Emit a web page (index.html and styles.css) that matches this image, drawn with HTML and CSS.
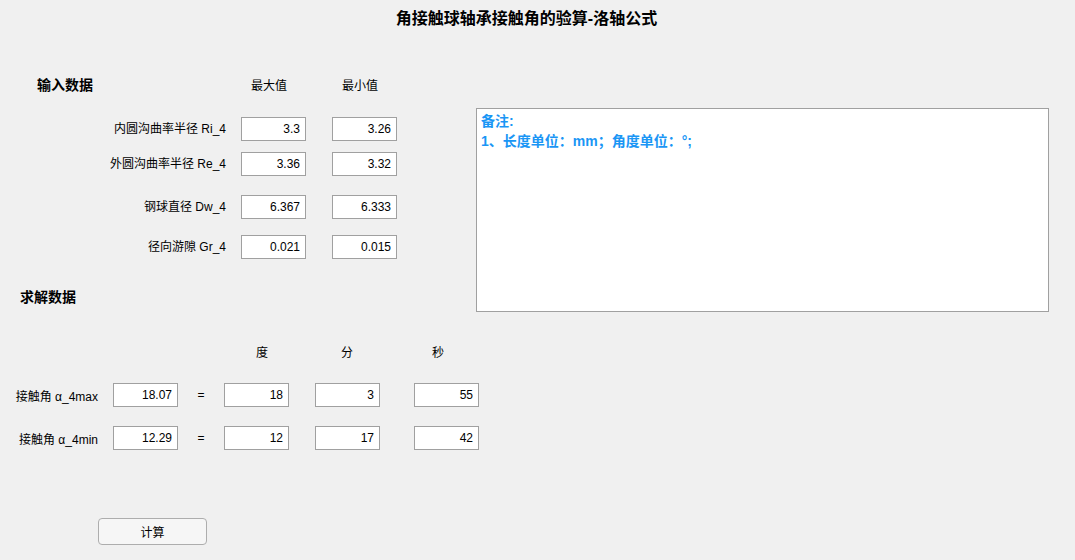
FILE: index.html
```html
<!DOCTYPE html>
<html lang="zh-CN">
<head>
<meta charset="utf-8">
<title>角接触球轴承接触角的验算-洛轴公式</title>
<link rel="stylesheet" href="styles.css">
</head>
<body>
<div class="app">
  <h1 class="title">角接触球轴承接触角的验算-洛轴公式</h1>
  <div class="top">
    <div class="input-panel">
      <div class="grid-row head">
        <span class="sec sec-in">输入数据</span>
        <span class="colh">最大值</span>
        <span class="colh">最小值</span>
      </div>
      <div class="grid-row r1">
        <span class="lbl">内圆沟曲率半径 Ri_4</span>
        <span class="field">3.3</span>
        <span class="field">3.26</span>
      </div>
      <div class="grid-row r2">
        <span class="lbl">外圆沟曲率半径 Re_4</span>
        <span class="field">3.36</span>
        <span class="field">3.32</span>
      </div>
      <div class="grid-row r3">
        <span class="lbl">钢球直径 Dw_4</span>
        <span class="field">6.367</span>
        <span class="field">6.333</span>
      </div>
      <div class="grid-row r4">
        <span class="lbl">径向游隙 Gr_4</span>
        <span class="field">0.021</span>
        <span class="field">0.015</span>
      </div>
      <div class="sec sec-out">求解数据</div>
    </div>
    <div class="notes">
      <div>备注:</div>
      <div>1、长度单位：mm；角度单位：°;</div>
    </div>
  </div>
  <div class="solve">
    <div class="solve-head">
      <span class="dh d1">度</span>
      <span class="dh d2">分</span>
      <span class="dh d3">秒</span>
    </div>
    <div class="solve-row s1">
      <span class="slbl">接触角 α_4max</span>
      <span class="field">18.07</span>
      <span class="eq">=</span>
      <span class="field">18</span>
      <span class="field f3">3</span>
      <span class="field f4">55</span>
    </div>
    <div class="solve-row s2">
      <span class="slbl">接触角 α_4min</span>
      <span class="field">12.29</span>
      <span class="eq">=</span>
      <span class="field">12</span>
      <span class="field f3">17</span>
      <span class="field f4">42</span>
    </div>
  </div>
  <button class="btn" type="button">计算</button>
</div>
</body>
</html>
```

FILE: styles.css
```css
* { box-sizing: border-box; }

html, body {
  margin: 0;
  padding: 0;
  background: #f0f0f0;
}

body {
  font-family: "Liberation Sans", "Noto Sans CJK SC", sans-serif;
  font-size: 12px;
  color: #000;
}

.app {
  width: 1075px;
  height: 560px;
  overflow: hidden;
}

.title {
  margin: 0;
  height: 36px;
  line-height: 37px;
  font-size: 16px;
  font-weight: bold;
  text-align: center;
  padding-right: 22px;
}

.top {
  display: flex;
  align-items: flex-start;
}

.input-panel {
  width: 476px;
  flex: none;
}

.grid-row {
  display: grid;
  grid-template-columns: 226px 65px 65px;
  column-gap: 15px;
  align-items: center;
}
.grid-row > :nth-child(3) { margin-left: 11px; }

.head { margin-top: 39px; height: 20px; }
.r1 { margin-top: 22px; }
.r2 { margin-top: 11px; }
.r3 { margin-top: 19px; }
.r4 { margin-top: 16px; }

.sec {
  font-size: 14px;
  font-weight: bold;
  line-height: 20px;
}
.sec-in { padding-left: 37px; }
.sec-out { margin-top: 28px; padding-left: 20px; height: 20px; }

.colh {
  padding-left: 10px;
  line-height: 20px;
  position: relative;
  top: 1px;
}

.lbl {
  text-align: right;
  white-space: nowrap;
  line-height: 16px;
}

.field {
  display: block;
  height: 24px;
  width: 65px;
  line-height: 22px;
  background: #fff;
  border: 1px solid #a0a0a0;
  text-align: right;
  padding-right: 5px;
  white-space: nowrap;
}

.notes {
  margin-top: 72px;
  width: 573px;
  height: 204px;
  background: #fff;
  border: 1px solid #a0a0a0;
  padding: 2px 4px;
  color: #1a96f5;
  font-size: 14px;
  font-weight: bold;
  line-height: 20px;
}

.solve-head {
  display: flex;
  margin-top: 31px;
  height: 20px;
  line-height: 20px;
}
.dh { width: 12px; }
.d1 { margin-left: 256px; }
.d2 { margin-left: 73px; }
.d3 { margin-left: 79px; }

.solve-row {
  display: flex;
  align-items: center;
}
.s1 { margin-top: 20px; }
.s2 { margin-top: 19px; }

.slbl {
  width: 98px;
  text-align: right;
  white-space: nowrap;
  margin-right: 15px;
}
.eq {
  width: 46px;
  text-align: center;
}
.f3 { margin-left: 26px; }
.f4 { margin-left: 34px; }

.btn {
  display: block;
  margin: 68px 0 0 98px;
  width: 109px;
  height: 27px;
  border: 1px solid #adadad;
  border-radius: 4px;
  background: #f6f6f6;
  font-family: "Liberation Sans", "Noto Sans CJK SC", sans-serif;
  font-size: 12px;
  color: #000;
  padding: 0;
}
```
